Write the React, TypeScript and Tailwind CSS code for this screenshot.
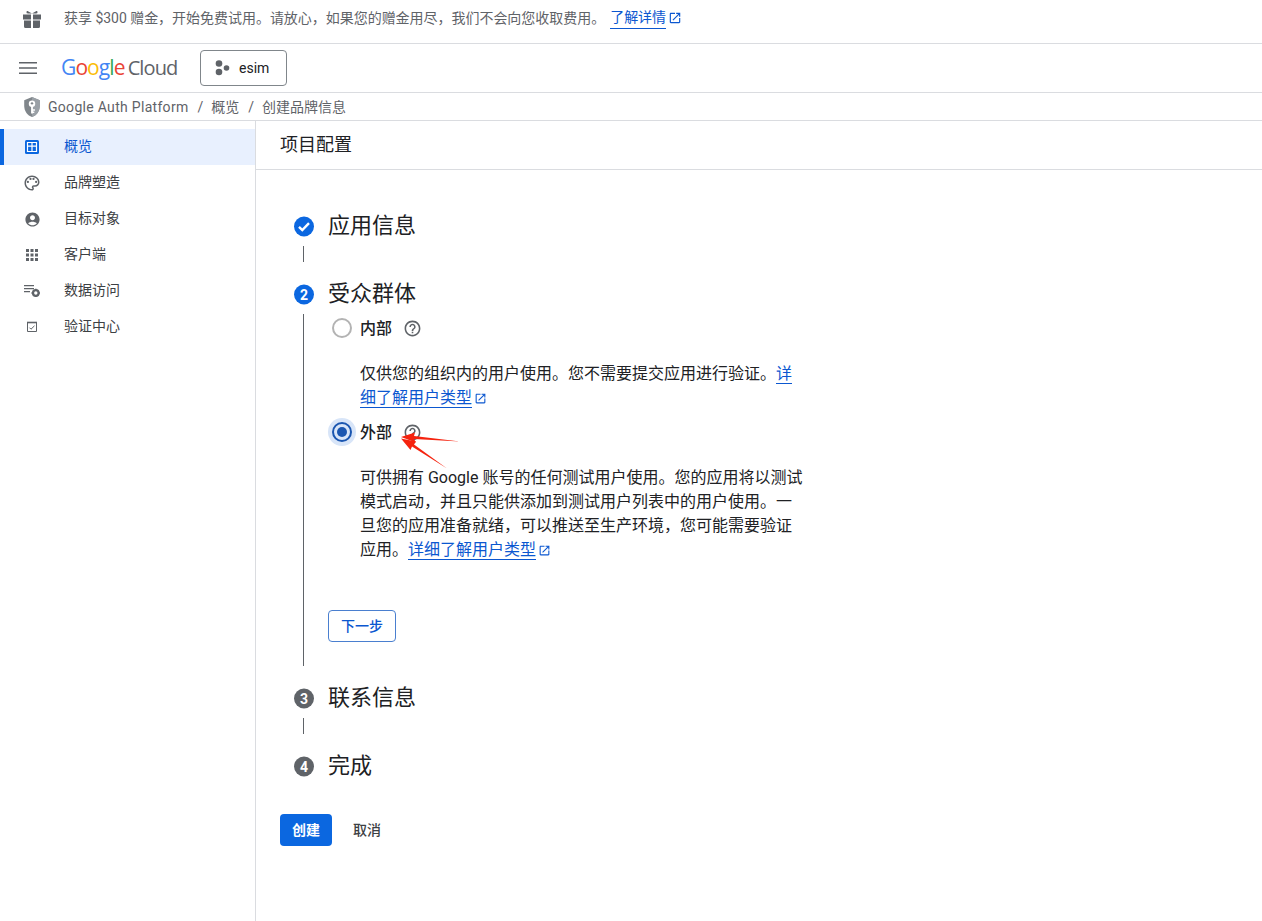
import React from "react";

const P = ({ d, className }: { d: string; className?: string }) => (
  <svg viewBox="0 0 24 24" className={className} fill="currentColor"><path d={d} /></svg>
);
const OPEN = "M19 19H5V5h7V3H5c-1.11 0-2 .9-2 2v14c0 1.1.89 2 2 2h14c1.1 0 2-.9 2-2v-7h-2v7zM14 3v2h3.59l-9.83 9.83 1.41 1.41L19 6.41V10h2V3h-7z";
const HELP = "M11 18h2v-2h-2v2zm1-16C6.48 2 2 6.48 2 12s4.48 10 10 10 10-4.48 10-10S17.52 2 12 2zm0 18c-4.41 0-8-3.59-8-8s3.59-8 8-8 8 3.59 8 8-3.59 8-8 8zm0-14c-2.21 0-4 1.79-4 4h2c0-1.1.9-2 2-2s2 .9 2 2c0 2-3 1.75-3 5h2c0-2.25 3-2.5 3-5 0-2.21-1.79-4-4-4z";
const PALETTE = "M12 2C6.49 2 2 6.49 2 12s4.49 10 10 10c1.38 0 2.5-1.12 2.5-2.5 0-.61-.23-1.2-.64-1.67-.08-.1-.13-.21-.13-.33 0-.28.22-.5.5-.5H16c3.31 0 6-2.69 6-6 0-4.96-4.49-9-10-9zm4 13h-1.77c-1.38 0-2.5 1.12-2.5 2.5 0 .61.22 1.19.63 1.65.06.07.14.19.14.35 0 .28-.22.5-.5.5-4.41 0-8-3.59-8-8s3.59-8 8-8 8 3.14 8 7c0 2.21-1.79 4-4 4zM5 10.500a1.500 1.500 0 1 0 3 0 1.500 1.500 0 0 0-3 0zm3.500-4a1.500 1.500 0 1 0 3 0 1.500 1.500 0 0 0-3 0zm4 0a1.500 1.500 0 1 0 3 0 1.500 1.500 0 0 0-3 0zm3.500 4a1.500 1.500 0 1 0 3 0 1.500 1.500 0 0 0-3 0z";
const ACCOUNT = "M12 2C6.48 2 2 6.48 2 12s4.48 10 10 10 10-4.48 10-10S17.52 2 12 2zm0 4c1.93 0 3.5 1.57 3.5 3.5S13.93 13 12 13s-3.5-1.57-3.5-3.5S10.07 6 12 6zm0 14c-2.03 0-4.43-.82-6.14-2.88C7.55 15.8 9.68 15 12 15s4.45.8 6.14 2.12C16.43 19.18 14.03 20 12 20z";

const Gift = () => (
  <svg viewBox="0 0 18 18" className="w-[18px] h-[18px] text-[#5f6368]" fill="currentColor">
    <path d="M0 4.500h8V9.500H0zM10 4.500h8V9.500h-8zM1 10.500h7V18H2.500A1.500 1.500 0 0 1 1 16.500zM10 10.500h7v6a1.500 1.500 0 0 1-1.500 1.500H10z" />
    <path d="M9 3.400 5 1.200C4 .8 3.500 1.500 3.500 2.200c0 .8.500 1.200 1.200 1.200zM9 3.400l4-2.200c1-.4 1.500.3 1.500 1 0 .8-.5 1.200-1.200 1.200z" />
  </svg>
);

const Shield = () => (
  <svg viewBox="0 0 20 24" className="w-[20px] h-[22px]">
    <path d="M10 1 1.500 4.500v6.500c0 5.500 3.600 10.500 8.500 12 4.900-1.500 8.500-6.500 8.500-12V4.500z" fill="#80868b" />
    <path d="M10 1 18.500 4.500v6.500c0 5.500-3.600 10.500-8.500 12z" fill="#9aa0a6" />
    <circle cx="10" cy="8.500" r="3.500" fill="#fff" />
    <circle cx="10" cy="8" r="1.300" fill="#80868b" />
    <path d="M9 11h2v8H9zM11 14.500h2.200V16H11zM11 17h1.500v1.500H11z" fill="#fff" />
  </svg>
);

const NavOverview = () => (
  <svg viewBox="0 0 14 14" className="w-[14px] h-[14px]">
    <rect width="14" height="14" rx="1.500" fill="#0b67e0" />
    <path d="M2.500 2.500h9v9h-9zM2.500 6.200h9M7 2.500v9" fill="none" stroke="#fff" strokeWidth="1.200" />
  </svg>
);
const NavApps = () => (
  <svg viewBox="0 0 12 12" className="w-3 h-3" fill="#5f6368">
    {[0, 4.5, 9].flatMap((y) => [0, 4.5, 9].map((x) => <rect key={`${x}-${y}`} x={x} y={y} width="3" height="3" />))}
  </svg>
);
const NavData = () => (
  <svg viewBox="0 0 16 12" className="w-4 h-3" fill="#5f6368">
    <path d="M0 0h10v1.200H0zM0 3h10v1.200H0zM0 6h6v1.200H0z" />
    <circle cx="11.800" cy="8" r="2.800" fill="none" stroke="#5f6368" strokeWidth="2.200" />
    <path d="M11 3.800h1.600v1.200H11zM11 11h1.600v1H11zM7.400 7.200h1.200v1.600H7.400zM15 7.200h1v1.600h-1z" />
  </svg>
);
const NavCheck = () => (
  <svg viewBox="0 0 12 12" className="w-3 h-3" fill="none" stroke="#5f6368">
    <path d="M1.500 1.500h9v9h-9z" strokeWidth="1" />
    <path d="M1 1.500h10" strokeWidth="1.600" />
    <path d="M3.500 6.700 5 8.200 8.500 4.800" strokeWidth="1" />
  </svg>
);

const navItems: [string, React.ReactNode][] = [
  ["概览", <NavOverview />],
  ["品牌塑造", <P d={PALETTE} className="w-[18px] h-[18px] shrink-0 text-[#5f6368]" />],
  ["目标对象", <P d={ACCOUNT} className="w-[17px] h-[17px] shrink-0 text-[#5f6368]" />],
  ["客户端", <NavApps />],
  ["数据访问", <NavData />],
  ["验证中心", <NavCheck />],
];

const Ext = ({ className }: { className?: string }) => (
  <P d={OPEN} className={`inline-block w-[13px] h-[13px] ml-[2px] align-[-2px] text-[#0b57d0] ${className ?? ""}`} />
);

const StepTitle = ({ n, label, done, active }: { n: number; label: string; done?: boolean; active?: boolean }) => (
  <div className="flex items-center h-8 gap-[14px]">
    <div className={`w-5 h-5 rounded-full flex items-center justify-center text-white text-[14px] font-bold translate-y-[0.5px] ${done || active ? "bg-[#0b67e0]" : "bg-[#5f6368]"}`}>
      {done ? (
        <svg viewBox="0 0 20 20" className="w-5 h-5" fill="none" stroke="#fff" strokeWidth="2.400"><path d="m5 10.300 3.300 3.300 6.700-7" /></svg>
      ) : n}
    </div>
    <div className="text-[22px] leading-8 text-[#202124]">{label}</div>
  </div>
);

const Connector = () => <div className="w-px h-4 my-1 ml-[9px] bg-[#5f6368]" />;

const Help = () => <P d={HELP} className="w-[19px] h-[19px] ml-[11px] text-[#5f6368]" />;

export default function App() {
  return (
    <div className="relative h-screen overflow-hidden bg-white text-[#202124] [font-family:Roboto,'Noto_Sans_CJK_SC',sans-serif]">
      {/* banner */}
      <div className="h-11 border-b border-[#dadce0] flex items-start pl-[23px] pt-[10px]">
        <Gift />
        <div className="ml-[23px] -mt-[3px] text-[14px] leading-5 text-[#5f6368] flex items-center tracking-[-0.03px]">
          获享 $300 赠金，开始免费试用。请放心，如果您的赠金用尽，我们不会向您收取费用。
          <span className="ml-[5px] text-[#0b57d0] border-b border-[#0b57d0] leading-[21px]">了解详情</span>
          <P d={OPEN} className="w-[14px] h-[14px] ml-[2px] text-[#0b57d0]" />
        </div>
      </div>
      {/* header */}
      <div className="h-[49px] border-b border-[#dadce0] flex items-center pl-[19px]">
        <svg viewBox="0 0 18 12" className="w-[18px] h-3 text-[#5f6368]" fill="currentColor">
          <path d="M0 0h18v1.500H0zM0 5.200h18v1.500H0zM0 10.500h18V12H0z" />
        </svg>
        <div className="ml-6 w-[120px] text-[21px] tracking-[-0.9px] [font-family:'Open_Sans',sans-serif] whitespace-nowrap">
          <span className="text-[#4285f4]">G</span><span className="text-[#ea4335]">o</span><span className="text-[#fbbc04]">o</span><span className="text-[#4285f4]">g</span><span className="text-[#34a853]">l</span><span className="text-[#ea4335]">e</span>
          <span className="text-[#5f6368] ml-[3px] text-[20px] tracking-[-0.9px]">Cloud</span>
        </div>
        <div className="ml-[19px] w-[87px] h-9 border border-[#80868b] rounded flex items-center pl-[13px] gap-2">
          <svg viewBox="0 0 16 16" className="w-4 h-4" fill="#5f6368">
            <circle cx="5" cy="3.500" r="3.300" /><circle cx="5" cy="12" r="3.300" /><circle cx="12.500" cy="8" r="2.800" />
          </svg>
          <span className="text-[14px] ml-[1px]">esim</span>
        </div>
      </div>
      {/* breadcrumb */}
      <div className="h-7 border-b border-[#dadce0] flex items-center pl-[22px] pt-[1px] text-[14px] text-[#5f6368] whitespace-nowrap">
        <Shield />
        <span className="ml-[6px] tracking-[0.3px]">Google Auth Platform</span>
        <span className="ml-[9px] mr-2">/</span>
        <span>概览</span>
        <span className="ml-[9px] mr-2">/</span>
        <span>创建品牌信息</span>
      </div>
      {/* body */}
      <div className="flex h-[800px]">
        <aside className="w-[256px] shrink-0 border-r border-[#dadce0] pt-2">
          {navItems.map(([label, icon], i) => (
            <div key={label} className={`h-9 flex items-center text-[14px] relative ${i === 0 ? "bg-[#e8f0fe] text-[#0b57d0] border-l-4 border-[#0b67e0]" : "text-[#3c4043] border-l-4 border-transparent"}`}>
              <div className="w-4 h-4 ml-5 flex items-center justify-center">{icon}</div>
              <span className="ml-6 -translate-y-px">{label}</span>
            </div>
          ))}
        </aside>
        <main className="flex-1 min-w-0">
          <div className="h-[49px] border-b border-[#dadce0] pl-6 pb-[2px] flex items-center text-[18px] text-[#202124]">项目配置</div>
          <div className="pt-10 pl-[38px]">
            <StepTitle n={1} label="应用信息" done />
            <Connector />
            <div className="mt-4"><StepTitle n={2} label="受众群体" active /></div>
            <div className="flex mt-1">
              <div className="w-px ml-[9px] bg-[#5f6368]" />
              <div className="ml-6 pb-6 w-[476px]">
                <div className="flex items-center h-7">
                  <div className="w-7 h-7 flex items-center justify-center">
                    <div className="w-5 h-5 rounded-full border-2 border-[#b3b3b3]" />
                  </div>
                  <span className="ml-1 text-[16px] font-medium text-[#202124] translate-y-px">内部</span>
                  <Help />
                </div>
                <p className="mt-5 pl-8 text-[16px] leading-6 text-[#202124]">
                  仅供您的组织内的用户使用。您不需要提交应用进行验证。<span className="text-[#0b57d0] border-b border-[#0b57d0]">详细了解用户类型</span><Ext />
                </p>
                <div className="flex items-center h-7 mt-2">
                  <div className="w-7 h-7 rounded-full bg-[#d8e5f8] flex items-center justify-center">
                    <div className="w-5 h-5 rounded-full border-2 border-[#1a56b0] flex items-center justify-center">
                      <div className="w-2.5 h-2.5 rounded-full bg-[#1a56b0]" />
                    </div>
                  </div>
                  <span className="ml-1 text-[16px] font-medium text-[#202124] translate-y-px">外部</span>
                  <Help />
                </div>
                <p className="mt-5 pl-8 text-[16px] leading-6 text-[#202124]">
                  可供拥有 Google 账号的任何测试用户使用。您的应用将以测试模式启动，并且只能供添加到测试用户列表中的用户使用。一旦您的应用准备就绪，可以推送至生产环境，您可能需要验证应用。<span className="text-[#0b57d0] border-b border-[#0b57d0]">详细了解用户类型</span><Ext />
                </p>
                <button className="mt-12 block w-[68px] h-8 border border-[#4a7fcf] rounded text-[14px] font-medium text-[#0b57d0] bg-white">下一步</button>
              </div>
            </div>
            <div className="mt-4"><StepTitle n={3} label="联系信息" /></div>
            <Connector />
            <div className="mt-4"><StepTitle n={4} label="完成" /></div>
          </div>
          <div className="mt-8 ml-6 flex items-center">
            <button className="w-[52px] h-8 rounded bg-[#0b67e0] text-white text-[14px] font-bold">创建</button>
            <button className="ml-[21px] text-[14px] font-medium text-[#3c4043]">取消</button>
          </div>
        </main>
      </div>
      {/* annotation arrows */}
      <svg className="absolute left-[396px] top-[430px] w-[70px] h-[45px] pointer-events-none" viewBox="0 0 70 45" fill="#f5230f">
        <path d="M5 7 19 2.500 18 6 64 11.500 18 9 20 12.500z" />
        <path d="M5 8.500 20 11.500 18 14.500 51 38.500 16 16.500 14.500 20z" />
      </svg>
    </div>
  );
}
